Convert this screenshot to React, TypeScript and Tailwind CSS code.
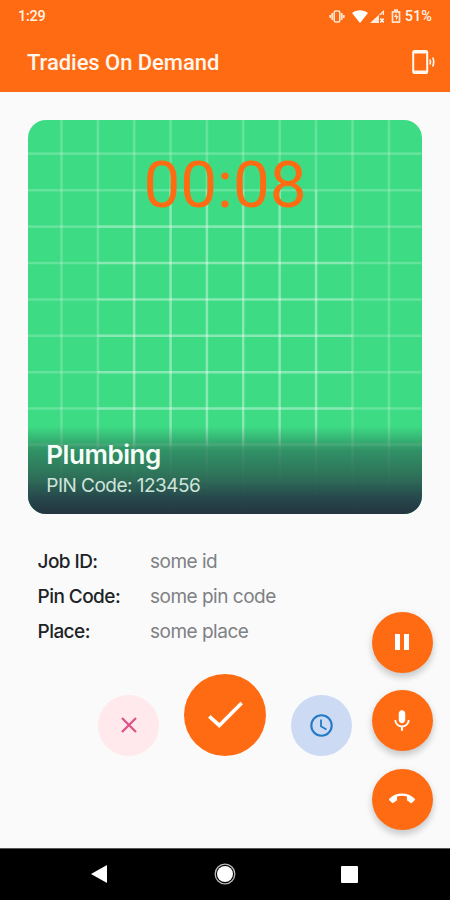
import type { ReactNode } from "react";

const columns = [33.5, 70, 106.3, 142.8, 179.2, 215.5, 252, 288.5, 325, 361.5];
const rows = [33.4, 70, 106.5, 142.9, 179.4, 215.8, 252.3, 288.7, 325.1, 361.5];

function GridBackdrop() {
  return (
    <svg className="absolute inset-0 size-full" viewBox="0 0 394 394" fill="none" stroke="#fff">
      <g strokeOpacity=".2" strokeWidth="2.6">
        {columns.map((x) => (
          <path key={x} d={`M${x} 0V394`} />
        ))}
        {rows.map((y) => (
          <path key={y} d={`M0 ${y}H394`} />
        ))}
      </g>
      <g strokeOpacity=".24" strokeWidth="2.4">
        {columns.slice(2, 8).map((x) => (
          <path key={x} d={`M${x} 70V325`} />
        ))}
        {rows.slice(2, 8).map((y) => (
          <path key={y} d={`M70 ${y}H325`} />
        ))}
      </g>
    </svg>
  );
}

function StatusBar() {
  return (
    <div className="flex h-8 items-center justify-between pl-[18px] pr-[18px] font-['Roboto',sans-serif] text-[14.5px] font-medium text-[#fff3e6]">
      <span className="pt-[2px] tracking-[-0.3px]">1:29</span>
      <div className="flex items-center">
        <svg className="mr-[7px] h-[13px] w-4" viewBox="0 0 16 13" fill="none" stroke="#ffe5d0">
          <rect x="5.2" y="1" width="5.6" height="11" rx="1.5" strokeWidth="1.6" />
          <path d="M3.2 3v7M12.8 3v7M1.2 5v3M14.8 5v3" strokeWidth="1.7" />
        </svg>
        <svg className="mr-[2px] h-[13px] w-4" viewBox="0 0 16 13" fill="#fff">
          <path d="M0 3C4.6-.8 11.4-.8 16 3L8 13Z" />
        </svg>
        <svg className="mr-[7px] h-[13px] w-[14px]" viewBox="0 0 14 13" fill="#fff3e8">
          <path d="M0 13 14 0v5H9v8Z" fillOpacity=".95" />
          <path d="M10.5 5 13 2.3V5Z" fill="#ff6b12" fillOpacity=".6" />
          <path d="m10.3 8.5 3.4 4m0-4-3.4 4" stroke="#fff3e8" strokeWidth="1.6" />
        </svg>
        <svg className="mr-[4px] h-[14px] w-[10px]" viewBox="0 0 10 14" fill="none" stroke="#ffe5d0">
          <path d="M3 1.2h4M1.5 2.8h7v10.3h-7Z" strokeWidth="1.7" strokeLinejoin="round" />
          <path d="M5.5 4 3 8h2v3.5L7.3 7.2H5.5Z" fill="#fff3e8" stroke="none" />
        </svg>
        <span className="pt-[2px]">51%</span>
      </div>
    </div>
  );
}

function Header() {
  return (
    <header className="h-[92px] bg-[#ff6b12]">
      <StatusBar />
      <div className="flex h-[60px] items-center justify-between pl-[27px] pr-[15px]">
        <h1 className="font-['Roboto',sans-serif] text-[22px] font-medium tracking-[-0.05px] text-[#fff6ee]">
          Tradies On Demand
        </h1>
        <svg className="h-[26px] w-6" viewBox="0 0 24 26" fill="none" stroke="#fff8f0">
          <rect x="2.2" y="2" width="14" height="22" rx="1.5" strokeWidth="2" />
          <path d="M2.2 3h14M2.2 23h14" strokeWidth="3" />
          <path d="M18.9 10.5q1.2 2.5 0 5" strokeWidth="1.7" />
          <path d="M21.7 8.5q2 4.5 0 9" strokeWidth="1.7" />
        </svg>
      </div>
    </header>
  );
}

function JobCard() {
  return (
    <section className="relative mx-[28.3px] mt-[28px] flex h-[394px] flex-col items-center justify-between overflow-hidden rounded-[18px] bg-[#3ddc84]">
      <GridBackdrop />
      <time className="relative mt-[26px] font-['Roboto',sans-serif] text-[65.5px] leading-[77px] text-[#ff6b12]">
        00:08
      </time>
      <div className="relative h-[88px] w-full bg-[linear-gradient(180deg,#27765a00_0%,#2a6a55a6_28%,#2c6454e6_58%,#26434af8_82%,#243540_100%)] pl-[18px] pt-[13px] font-['Inter',sans-serif]">
        <h2 className="text-[26px] font-semibold leading-[32px] tracking-[-0.45px] text-[#f7fff9]">Plumbing</h2>
        <p className="text-[19px] leading-[29px] tracking-[-0.53px] text-[#cfe4db]">PIN Code: 123456</p>
      </div>
    </section>
  );
}

const details = [
  ["Job ID:", "some id"],
  ["Pin Code:", "some pin code"],
  ["Place:", "some place"],
];

function Details() {
  return (
    <dl className="mt-[30.4px] pl-[37.5px] font-['Inter',sans-serif] text-[19px] leading-[35px] tracking-[-0.5px]">
      {details.map(([label, value]) => (
        <div key={label} className="flex">
          <dt className="w-[112.5px] font-medium tracking-[-0.55px] text-[#202326]">{label}</dt>
          <dd className="text-[#7e8184]">{value}</dd>
        </div>
      ))}
    </dl>
  );
}

function Actions() {
  return (
    <div className="mt-[24.6px] flex items-end justify-center gap-[25px]">
      <button aria-label="Decline" className="flex size-[61px] items-center justify-center rounded-full bg-[#ffe9ed]">
        <svg className="size-4" viewBox="0 0 16 16" stroke="#df5288" strokeWidth="2.3">
          <path d="m1 1 14 14M15 1 1 15" />
        </svg>
      </button>
      <button aria-label="Accept" className="flex size-[82px] items-center justify-center rounded-full bg-[#ff6b12]">
        <svg className="h-[27px] w-[35px]" viewBox="0 0 35 27" fill="none" stroke="#fff" strokeWidth="3.6">
          <path d="m1.3 15.3 10 9.1L33.7 2" />
        </svg>
      </button>
      <button aria-label="Schedule" className="flex size-[61px] items-center justify-center rounded-full bg-[#cddaf4]">
        <svg className="size-[23px]" viewBox="0 0 23 23" fill="none" stroke="#237bc5">
          <circle cx="11.5" cy="11.5" r="10.2" strokeWidth="2.1" />
          <path d="M11 5.5v6.7l5.4 3.2" strokeWidth="1.8" />
        </svg>
      </button>
    </div>
  );
}

function Fab({ label, children }: { label: string; children: ReactNode }) {
  return (
    <button
      aria-label={label}
      className="flex size-[61px] items-center justify-center rounded-full bg-[#ff6b12] shadow-[0_5px_6px_rgba(0,0,0,0.14),0_2px_10px_rgba(0,0,0,0.08)]"
    >
      {children}
    </button>
  );
}

function FloatingControls() {
  return (
    <div className="absolute bottom-[18px] right-[17.4px] flex flex-col gap-[17.7px]">
      <Fab label="Pause">
        <svg className="h-4 w-[14px]" viewBox="0 0 14 16" fill="#fff">
          <path d="M0 0h5v16H0ZM9 0h5v16H9Z" />
        </svg>
      </Fab>
      <Fab label="Mute">
        <svg className="size-[26px]" viewBox="0 0 24 24" fill="#fff">
          <path d="M12 14c1.66 0 2.99-1.34 2.99-3L15 5c0-1.66-1.34-3-3-3S9 3.34 9 5v6c0 1.66 1.34 3 3 3zm5.3-3c0 3-2.54 5.1-5.3 5.1S6.7 14 6.7 11H5c0 3.41 2.72 6.23 6 6.72V21h2v-3.28c3.28-.48 6-3.3 6-6.72h-1.7z" />
        </svg>
      </Fab>
      <Fab label="End call">
        <svg className="mb-[2px] size-[26px]" viewBox="0 0 24 24" fill="#fff">
          <path d="M12 9c-1.6 0-3.15.25-4.6.72v3.1c0 .39-.23.74-.56.9-.98.49-1.87 1.12-2.66 1.85-.18.18-.43.28-.7.28-.28 0-.53-.11-.71-.29L.29 13.08c-.18-.17-.29-.42-.29-.7 0-.28.11-.53.29-.71C3.34 8.78 7.46 7 12 7s8.66 1.78 11.71 4.67c.18.18.29.43.29.71 0 .28-.11.53-.29.71l-2.48 2.48c-.18.18-.43.29-.71.29-.27 0-.52-.11-.7-.28-.79-.74-1.69-1.36-2.67-1.85-.33-.16-.56-.5-.56-.9v-3.1C15.15 9.25 13.6 9 12 9z" />
        </svg>
      </Fab>
    </div>
  );
}

function NavigationBar() {
  return (
    <nav className="flex h-[52px] items-center justify-between border-t border-[#555] bg-black pb-px pl-[91px] pr-[92px]">
      <svg className="h-[18px] w-4" viewBox="0 0 16 18" fill="#fff">
        <path d="M0 9 16 0v18Z" />
      </svg>
      <svg className="ml-[1px] size-[22px]" viewBox="0 0 22 22">
        <circle cx="11" cy="11" r="9.8" fill="none" stroke="#bbb" strokeWidth="1.3" />
        <circle cx="11" cy="11" r="8" fill="#fff" />
      </svg>
      <div className="size-[17px] rounded-[1px] bg-white" />
    </nav>
  );
}

export default function App() {
  return (
    <div className="flex h-[900px] w-[450px] flex-col overflow-hidden bg-[#fafafa]">
      <Header />
      <main className="relative flex-1">
        <JobCard />
        <Details />
        <Actions />
        <FloatingControls />
      </main>
      <NavigationBar />
    </div>
  );
}
